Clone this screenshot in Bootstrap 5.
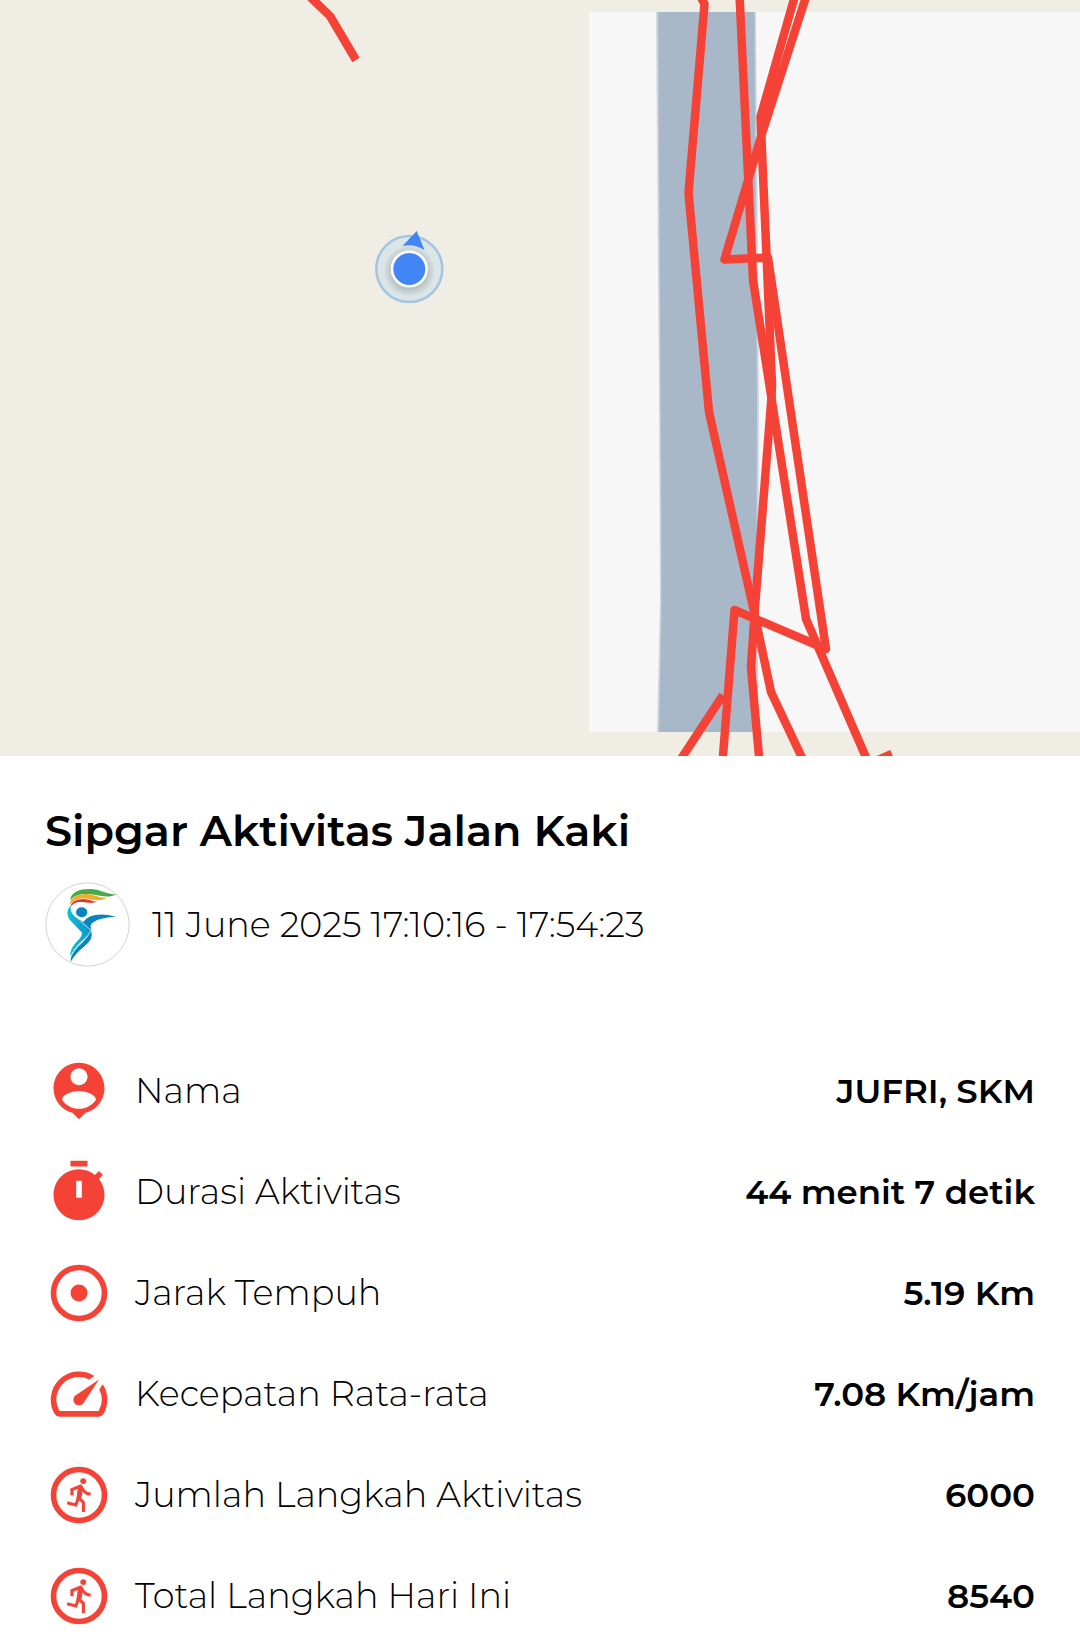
<!DOCTYPE html>
<html lang="id">
<head>
<meta charset="utf-8">
<meta name="viewport" content="width=device-width, initial-scale=1">
<title>Sipgar Aktivitas Jalan Kaki</title>
<link href="https://cdn.jsdelivr.net/npm/bootstrap@5.3.0/dist/css/bootstrap.min.css" rel="stylesheet">
<style>
  body { font-family: Montserrat, Inter, "Open Sans", sans-serif; color: #000; background: #fff; }
  .route-map { aspect-ratio: 10 / 7; background: #f0ede5; }
  .sheet { padding: 47px 45px 0; }
  .sheet-title { font-size: 43px; line-height: 56px; font-weight: 600; margin-bottom: 23px; }
  .stamp { gap: 22px; font-size: 35px; line-height: 46px; font-weight: 300; margin-bottom: 73px; }
  .avatar { width: 85px; height: 85px; }
  .stat { gap: 22px; height: 101px; line-height: 46px; }
  .stat dt { font-size: 35px; font-weight: 300; }
  .stat dd { font-size: 34px; font-weight: 600; }
  .stat-icon { width: 68px; height: 68px; fill: #f44336; }
</style>
</head>
<body>
<main>
  <section class="route-map w-100 overflow-hidden" aria-label="Peta rute">
    <svg class="d-block w-100 h-100" viewBox="0 0 1080 756" preserveAspectRatio="xMidYMid slice" role="img" aria-label="Rute jalan kaki">
      <defs>
        <radialGradient id="dotShade"><stop offset=".6" stop-color="#000" stop-opacity=".2"/><stop offset="1" stop-color="#000" stop-opacity="0"/></radialGradient>
      </defs>
      <rect x="589" y="12" width="491" height="720" fill="#f7f7f7"/>
      <path d="M656 12H756L759 400 758 732H657L660 600 659 400Z" fill="#cdd5de"/>
      <path d="M658 12H754.500L757 400 756 732H659L661.500 600 660.500 400Z" fill="#a9b8c9"/>
      <g fill="none" stroke="#f44336" stroke-width="8.500" stroke-linejoin="round">
        <path d="M305-8 330 16 356 60"/>
        <path d="M698-8 704.500 4 688.500 193 709 412 753 607 771 692 804 762"/>
        <path d="M739.500-5 753 280 806 619 868 762"/>
        <path d="M796-8 760.500 117 766.500 255 772 384 771.500 397 755 607 751 667 759.500 762"/>
        <path d="M807.500-8 761.500 135 724.500 259.500 768 257.500 789 400 826 649 734.500 610 722.500 762"/>
        <path d="M723 695 679 762"/>
        <path d="M878 760 892 754"/>
      </g>
      <circle cx="409.300" cy="269" r="33" fill="#b4d7eb" fill-opacity=".35" stroke="#a3c5e0" stroke-width="2.500"/>
      <circle cx="409.300" cy="271" r="26" fill="url(#dotShade)"/>
      <path d="M416.700 231 402.500 246Q414 243.500 424.500 250Z" fill="#4285f4"/>
      <circle cx="409.300" cy="269" r="17.300" fill="#4285f4" stroke="#fff" stroke-width="2.600"/>
    </svg>
  </section>

  <section class="sheet">
    <h1 class="sheet-title">Sipgar Aktivitas Jalan Kaki</h1>
    <div class="stamp d-flex align-items-center">
      <svg class="avatar flex-shrink-0" viewBox="44 275 255 256" aria-hidden="true">
        <defs>
          <linearGradient id="bodyTeal" x1="0" y1="0" x2="1" y2="1"><stop offset="0" stop-color="#00cbd8"/><stop offset=".6" stop-color="#19a5cf"/><stop offset="1" stop-color="#087cba"/></linearGradient>
          <linearGradient id="legTeal" x1="0" y1="1" x2="1" y2="0"><stop offset="0" stop-color="#00d2dc"/><stop offset="1" stop-color="#168bc4"/></linearGradient>
        </defs>
        <circle cx="171.500" cy="403" r="125.500" fill="#fff" stroke="#bbb" stroke-width="2"/>
        <path d="M119 330C122 304 148 296 178 296 211 296 227 312 258 313 240 321 225 320 205 316 172 307 135 309 119 330Z" fill="#4aa847"/>
        <path d="M118 345C118 321 140 311 168 311 194 313 202 322 230 323 212 332 201 330 184 328 153 321 131 324 118 345Z" fill="#f3ab2c"/>
        <path d="M120 352C121 334 138 326 160 326 176 327 183 333 201 334 185 340 177 338 162 336 141 334 128 337 120 352Z" fill="#dc3a2e"/>
        <ellipse cx="154" cy="366" rx="17" ry="15" fill="#0783bd"/>
        <path d="M158 397C174 374 205 366 257 379 222 382 193 388 181 404L182 420Z" fill="#0783bd"/>
        <path d="M121 347C107 356 108 379 123 394L154 426C163 415 171 416 180 420 178 409 166 400 153 392 133 381 118 369 121 347Z" fill="url(#bodyTeal)"/>
        <path d="M153 397 182 421C188 439 181 452 168 463 147 481 132 494 121 516 119 500 130 484 145 468 162 453 174 440 179 422Z" fill="#0783bd"/>
        <path d="M140 405 154 424C158 440 143 450 132 463 120 477 119 490 120 500 130 480 145 461 161 448 175 436 181 426 180 418L153 396Z" fill="url(#legTeal)"/>
        <path d="M120 500C130 480 145 461 161 448 175 436 181 426 180 419 170 407 158 403 150 393" fill="none" stroke="#fff" stroke-width="2"/>
      </svg>
      <time datetime="2025-06-11T17:10:16">11 June 2025 17:10:16 - 17:54:23</time>
    </div>

    <dl class="mb-0">
      <div class="stat d-flex align-items-center">
        <svg class="stat-icon flex-shrink-0" viewBox="0 0 24 24" aria-hidden="true"><path d="M12 2c-4.970 0-9 4.030-9 9 0 4.170 2.840 7.670 6.690 8.690L12 22l2.310-2.310C18.160 18.670 21 15.170 21 11c0-4.970-4.030-9-9-9zm0 2c1.660 0 3 1.340 3 3s-1.340 3-3 3-3-1.340-3-3 1.340-3 3-3zm0 14.300c-2.500 0-4.710-1.280-6-3.220.03-1.990 4-3.080 6-3.080 1.990 0 5.970 1.090 6 3.080-1.290 1.940-3.500 3.220-6 3.220z"/></svg>
        <dt class="flex-grow-1">Nama</dt>
        <dd class="mb-0 text-end">JUFRI, SKM</dd>
      </div>
      <div class="stat d-flex align-items-center">
        <svg class="stat-icon flex-shrink-0" viewBox="0 0 24 24" aria-hidden="true"><path fill-rule="evenodd" d="M15 1H9v2h6V1zm-4 13h2V8h-2v6zm8.030-6.610l1.420-1.420c-.43-.51-.9-.99-1.410-1.410l-1.420 1.420C16.070 4.740 14.120 4 12 4c-4.970 0-9 4.030-9 9s4.020 9 9 9 9-4.030 9-9c0-2.120-.74-4.070-1.970-5.610z"/></svg>
        <dt class="flex-grow-1">Durasi Aktivitas</dt>
        <dd class="mb-0 text-end">44 menit 7 detik</dd>
      </div>
      <div class="stat d-flex align-items-center">
        <svg class="stat-icon flex-shrink-0" viewBox="0 0 24 24" aria-hidden="true"><circle cx="12" cy="12" r="9" fill="none" stroke="#f44336" stroke-width="2"/><circle cx="12" cy="12" r="3"/></svg>
        <dt class="flex-grow-1">Jarak Tempuh</dt>
        <dd class="mb-0 text-end">5.19 Km</dd>
      </div>
      <div class="stat d-flex align-items-center">
        <svg class="stat-icon flex-shrink-0" viewBox="0 0 24 24" aria-hidden="true"><path d="M20.380 8.570l-1.230 1.850a8 8 0 0 1-.22 7.580H5.070A8 8 0 0 1 15.580 6.850l1.850-1.230A10 10 0 0 0 3.350 19a2 2 0 0 0 1.720 1h13.850a2 2 0 0 0 1.740-1 10 10 0 0 0-.27-10.440zm-9.790 6.840a2 2 0 0 0 2.830 0l5.660-8.490-8.490 5.660a2 2 0 0 0 0 2.830z"/></svg>
        <dt class="flex-grow-1">Kecepatan Rata-rata</dt>
        <dd class="mb-0 text-end">7.08 Km/jam</dd>
      </div>
      <div class="stat d-flex align-items-center">
        <svg class="stat-icon flex-shrink-0" viewBox="0 0 24 24" aria-hidden="true"><g id="runner"><circle cx="12" cy="12" r="9" fill="none" stroke="#f44336" stroke-width="2"/><circle cx="13.500" cy="7.100" r="1.050"/><path d="M9.500 12.100V10.050L12.500 8.900 13.900 10.800Q14.700 11.600 16.100 11.700M12.700 9 11.700 13.200 10.900 15.500 7.800 14.700M11.900 13 13.550 14.600V18" fill="none" stroke="#f44336" stroke-width="1.100"/><path d="M11.700 8.600 13.300 8.700 13.100 12.300 12.400 13.800 11.100 13.400Z"/></g></svg>
        <dt class="flex-grow-1">Jumlah Langkah Aktivitas</dt>
        <dd class="mb-0 text-end">6000</dd>
      </div>
      <div class="stat d-flex align-items-center">
        <svg class="stat-icon flex-shrink-0" viewBox="0 0 24 24" aria-hidden="true"><use href="#runner"/></svg>
        <dt class="flex-grow-1">Total Langkah Hari Ini</dt>
        <dd class="mb-0 text-end">8540</dd>
      </div>
    </dl>
  </section>
</main>
<script src="https://cdn.jsdelivr.net/npm/bootstrap@5.3.0/dist/js/bootstrap.bundle.min.js"></script>
</body>
</html>
